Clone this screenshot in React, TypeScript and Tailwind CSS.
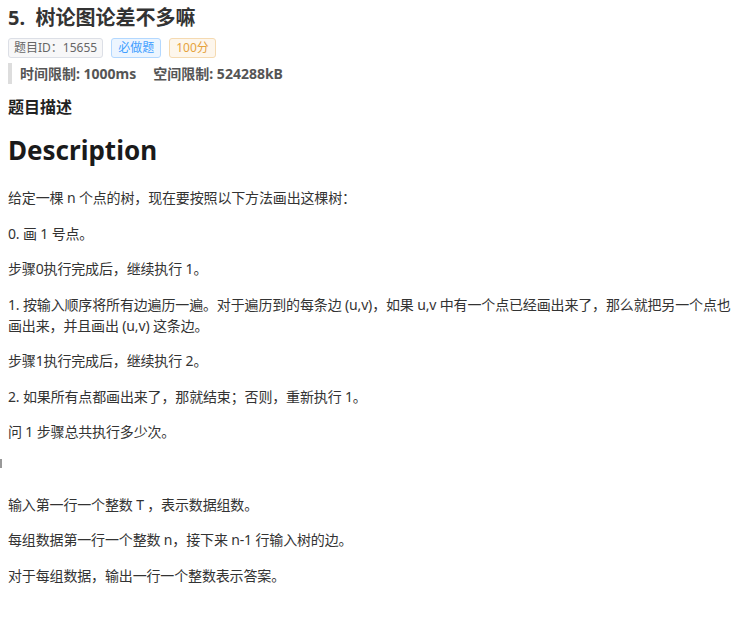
import React from 'react';

const paras: string[] = [
  '给定一棵 n 个点的树，现在要按照以下方法画出这棵树：',
  '0. 画 1 号点。',
  '步骤0执行完成后，继续执行 1。',
  '1. 按输入顺序将所有边遍历一遍。对于遍历到的每条边 (u,v)，如果 u,v 中有一个点已经画出来了，那么就把另一个点也画出来，并且画出 (u,v) 这条边。',
  '步骤1执行完成后，继续执行 2。',
  '2. 如果所有点都画出来了，那就结束；否则，重新执行 1。',
  '问 1 步骤总共执行多少次。',
];

const inputParas = [
  '输入第一行一个整数 T ，表示数据组数。',
  '每组数据第一行一个整数 n，接下来 n-1 行输入树的边。',
  '对于每组数据，输出一行一个整数表示答案。',
];

const font = "font-['Segoe_UI','Noto_Sans','Noto_Sans_CJK_SC',sans-serif]";

export default function App() {
  return (
    <div className={`min-h-screen bg-white pl-2 pt-[4px] text-[#333] ${font}`}>
      <h2 className="text-[20px] font-bold leading-[28px] text-[#333]">5.&nbsp; 树论图论差不多嘛</h2>

      <div className="mt-[6px] flex items-center gap-[8px] text-[12px]">
        <span className="rounded-[3px] border border-[#dcdfe6] bg-[#f7f7f8] px-[5px] leading-[18px] text-[#666]">
          题目ID：15655
        </span>
        <span className="rounded-[3px] border border-[#b3d8ff] bg-[#ecf5ff] px-[6px] leading-[18px] text-[#409eff]">
          必做题
        </span>
        <span className="rounded-[3px] border border-[#f5dab1] bg-[#fdf6ec] px-[6px] leading-[18px] text-[#e6a23c]">
          100分
        </span>
      </div>

      <div className="mt-[5px] flex gap-[17px] border-l-4 border-[#ddd] pl-[8px] text-[14px] font-bold leading-[21px] text-[#555]">
        <span>时间限制: 1000ms</span>
        <span>空间限制: 524288kB</span>
      </div>

      <h3 className="mt-[11px] text-[16px] font-bold leading-[24px] text-[#222]">题目描述</h3>

      <h1 className="mt-[13px] text-[26px] font-bold leading-[36px] text-[#1a1a1a]">Description</h1>

      <div className="mt-[19px] text-[14px] leading-[21px] tracking-[-0.15px] text-[#333]">
        {paras.map((p, i) => (
          <p key={i} className="mb-[14.5px]">
            {p}
          </p>
        ))}
        <div className="relative h-[21px]">
          <span className="absolute -left-2 top-[2px] h-[9px] w-[2px] bg-[#999]" />
        </div>
        <div className="h-[16px]" />
        {inputParas.map((p, i) => (
          <p key={i} className="mb-[14.5px]">
            {p}
          </p>
        ))}
      </div>
    </div>
  );
}
